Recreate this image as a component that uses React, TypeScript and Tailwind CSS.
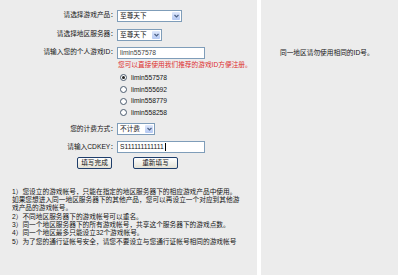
import type { ReactNode } from "react";

const font = "font-['Liberation_Sans','Noto_Sans_CJK_SC',sans-serif]";

function Row({ label, className, children }: { label: string; className: string; children: ReactNode }) {
  return (
    <div className={`flex items-center ${className}`}>
      <div className="w-[117px] shrink-0 text-right whitespace-nowrap">{label}</div>
      <div className="flex items-center">{children}</div>
    </div>
  );
}

function Select({ value, className }: { value: string; className: string }) {
  return (
    <div className={`flex h-[12px] items-stretch border border-[#7f9db9] bg-white ${className}`}>
      <div className="flex-1 pl-[2px] leading-[10px] whitespace-nowrap">{value}</div>
      <div className="m-[1px] flex w-[8px] items-center justify-center rounded-[1px] bg-gradient-to-b from-[#dfe8fb] to-[#b4c8f3]">
        <svg width="5" height="4" viewBox="0 0 5 4">
          <path d="M0.5 1 L2.5 3 L4.5 1" stroke="#4d6185" strokeWidth="1.2" fill="none" />
        </svg>
      </div>
    </div>
  );
}

function Radio({ checked, label }: { checked?: boolean; label: string }) {
  return (
    <div className="flex h-[11.7px] items-center pl-[120px]">
      <div className="flex h-[7px] w-[7px] items-center justify-center rounded-full border border-[#4a5a6e] bg-white">
        {checked && <div className="h-[3px] w-[3px] rounded-full bg-[#222]" />}
      </div>
      <span className="ml-[4px]">{label}</span>
    </div>
  );
}

const notes = [
  "1）您设立的游戏帐号，只能在指定的地区服务器下的相应游戏产品中使用。",
  "如果您想进入同一地区服务器下的其他产品，您可以再设立一个对应到其他游",
  "戏产品的游戏帐号。",
  "2）不同地区服务器下的游戏帐号可以重名。",
  "3）同一个地区服务器下的所有游戏帐号，共享这个服务器下的游戏点数。",
  "4）同一个地区最多只能设立32个游戏帐号。",
  "5）为了您的通行证帐号安全，请您不要设立与您通行证帐号相同的游戏帐号",
];

export default function App() {
  return (
    <div className={`flex h-[275px] w-[400px] bg-white text-[6.7px] text-[#141414] ${font}`}>
      {/* Form panel */}
      <div className="flex w-[257px] flex-col bg-[#ececec]">
        <Row label="请选择游戏产品：" className="mt-[9px] h-[13px]">
          <Select value="至尊天下" className="w-[65px]" />
        </Row>
        <Row label="请选择地区服务器：" className="mt-[6px] h-[13px]">
          <Select value="至尊天下" className="w-[45px]" />
        </Row>
        <Row label="请输入您的个人游戏ID：" className="mt-[5px] h-[13px]">
          <div className="h-[12px] w-[88px] border border-[#7f9db9] bg-white pl-[2px] leading-[10px] text-[#444]">
            limin557578
          </div>
        </Row>
        <div className="flex h-[13px] items-center pl-[118px] whitespace-nowrap text-[#dd2e2e]">
          您可以直接使用我们推荐的游戏ID方便注册。
        </div>
        <Radio checked label="limin557578" />
        <Radio label="limin555692" />
        <Radio label="limin558779" />
        <Radio label="limin558258" />
        <Row label="您的计费方式：" className="mt-[4px] h-[12px]">
          <Select value="不计费" className="w-[38px]" />
        </Row>
        <Row label="请输入CDKEY：" className="mt-[7px] h-[11px]">
          <div className="flex h-[12px] w-[88px] items-center border border-[#7f9db9] bg-white pl-[2px]">
            <span>S111111111111</span>
            <span className="ml-[1px] h-[8px] w-px bg-black" />
          </div>
        </Row>
        <div className="mt-[4px] flex h-[12px] gap-[21px] pl-[77px]">
          <button className="h-[12px] w-[35px] rounded-[2px] border border-[#1f3e6b] bg-gradient-to-b from-white to-[#e4e2d6] leading-[10px]">
            填写完成
          </button>
          <button className="h-[12px] w-[45px] rounded-[2px] border border-[#1f3e6b] bg-gradient-to-b from-white to-[#e4e2d6] leading-[10px]">
            重新填写
          </button>
        </div>
        <div className="mt-[19px] pl-[12px]">
          {notes.map((n) => (
            <div key={n} className="h-[8.33px] leading-[8.33px] whitespace-nowrap">
              {n}
            </div>
          ))}
        </div>
      </div>

      {/* Hint panel */}
      <div className="ml-[4px] w-[137px] bg-[#ececec] pt-[48px] pl-[19px]">
        <div className="leading-[9px] whitespace-nowrap">同一地区请勿使用相同的ID号。</div>
      </div>
    </div>
  );
}
